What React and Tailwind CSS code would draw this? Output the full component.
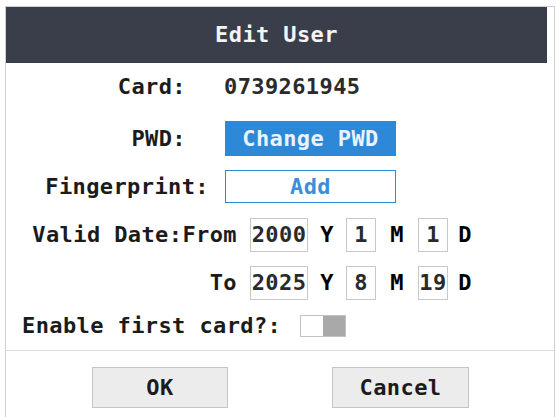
const mono = "font-['DejaVu_Sans_Mono','Liberation_Mono',monospace] font-bold text-[22px] tracking-[0.4px] leading-none";

function Box({ children, w }) {
  return (
    <span
      className={`${w} h-[34px] flex items-center justify-center border border-[#c9c9c9] text-[#2a2a2a]`}
    >
      {children}
    </span>
  );
}

function Unit({ children, ml }) {
  return <span className={`${ml} w-[14px] text-center`}>{children}</span>;
}

function DateRow({ label, year, month, day, className }) {
  return (
    <div className={`flex items-center ${className}`}>
      <span className="w-[231px] text-right text-[#1b1b1b]">{label}</span>
      <span className="ml-[13px]">
        <Box w="w-[58px]">{year}</Box>
      </span>
      <Unit ml="ml-[12px]">Y</Unit>
      <span className="ml-[12px]">
        <Box w="w-[30px]">{month}</Box>
      </span>
      <Unit ml="ml-[14px]">M</Unit>
      <span className="ml-[14px]">
        <Box w="w-[30px]">{day}</Box>
      </span>
      <Unit ml="ml-[10px]">D</Unit>
    </div>
  );
}

export default function App() {
  return (
    <div className={`w-[556px] h-[417px] overflow-hidden bg-white ${mono}`}>
      <div className="ml-[5px] mt-[6px] w-[550px] border border-[#cfcfcf] pb-[20px]">
        <div className="mr-[7px] h-[56px] bg-[#3a3d4a] flex items-center justify-center text-[#f4f4f4]">
          Edit User
        </div>

        <div className="mt-[7px] h-[34px] flex items-center text-[#1b1b1b]">
          <span className="w-[180px] text-right">Card:</span>
          <span className="ml-[38px] text-[#2a2a2a]">0739261945</span>
        </div>

        <div className="mt-[17px] flex items-center text-[#1b1b1b]">
          <span className="w-[180px] text-right">PWD:</span>
          <button className="ml-[39px] w-[171px] h-[35px] bg-[#2d88d8] text-[#eaf3fc] flex items-center justify-center">
            Change PWD
          </button>
        </div>

        <div className="mt-[14px] flex items-center text-[#1b1b1b]">
          <span className="w-[203px] text-right">Fingerprint:</span>
          <button className="ml-[16px] w-[171px] h-[33px] border border-[#2d88d8] text-[#3a8fd8] flex items-center justify-center">
            Add
          </button>
        </div>

        <DateRow className="mt-[15px]" label="Valid Date:From" year="2000" month="1" day="1" />
        <DateRow className="mt-[14px]" label="To" year="2025" month="8" day="19" />

        <div className="mt-[15px] h-[22px] flex items-center text-[#1b1b1b]">
          <span className="ml-[16px]">Enable first card?:</span>
          <span className="ml-[19px] w-[46px] h-[22px] flex border border-[#c2c2c2]">
            <span className="flex-1 bg-white" />
            <span className="flex-1 bg-[#a9a9a9]" />
          </span>
        </div>

        <div className="mt-[13px] border-t border-[#dedede]" />

        <div className="mt-[16px] flex text-[#1b1b1b]">
          <button className="ml-[86px] w-[136px] h-[41px] bg-[#ececec] border border-[#c4c4c4] flex items-center justify-center">
            OK
          </button>
          <button className="ml-[104px] w-[137px] h-[41px] bg-[#ececec] border border-[#c4c4c4] flex items-center justify-center">
            Cancel
          </button>
        </div>
      </div>
    </div>
  );
}
